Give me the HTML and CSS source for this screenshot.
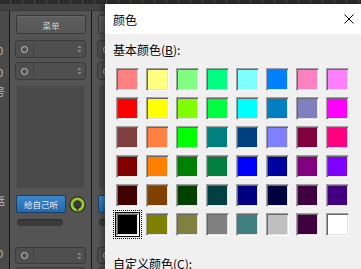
FILE: index.html
```html
<!DOCTYPE html>
<html lang="zh-CN">
<head>
  <meta charset="UTF-8">
  <link rel="stylesheet" href="styles.css">
  <title>颜色</title>
</head>
<body>
  <div class="ruler"></div>
  <div class="main">

    <div class="mixer">
      <div class="band"></div>
      <div class="strips">
        <div class="labels">
          <span class="lab lab1">0</span>
          <span class="lab lab2">0</span>
          <span class="lab lab3">号</span>
          <span class="lab lab4">话</span>
          <span class="lab lab5">0</span>
        </div>

        <div class="strip">
          <div class="menu-btn">菜单</div>
          <div class="combo first"><span class="ring-cell"><i class="ring"></i></span><svg class="arrows" width="5" height="8" viewBox="0 0 5 8"><path d="M2.5 0.5 L4.5 3 H0.5Z M2.5 7.5 L4.5 5 H0.5Z" fill="#8c8c8c"/></svg></div>
          <div class="combo second"><span class="ring-cell"><i class="ring"></i></span><svg class="arrows" width="5" height="8" viewBox="0 0 5 8"><path d="M2.5 0.5 L4.5 3 H0.5Z M2.5 7.5 L4.5 5 H0.5Z" fill="#8c8c8c"/></svg></div>
          <div class="meter"></div>
          <div class="monitor">
            <div class="blue-btn">给自己听</div>
            <svg class="knob" width="17" height="17" viewBox="0 0 17 17">
              <circle cx="8.5" cy="8.5" r="8.3" fill="#2c2c2c"/>
              <circle cx="8.5" cy="8.5" r="5.6" fill="none" stroke="#9cc92b" stroke-width="2.8"/>
              <circle cx="8.5" cy="8.5" r="3.4" fill="#3b3b3b"/>
              <rect x="7.6" y="9.5" width="1.8" height="5" fill="#2c2c2c"/>
            </svg>
          </div>
          <div class="slider"></div>
          <div class="combo third"><span class="ring-cell"><i class="ring"></i></span><svg class="arrows" width="5" height="8" viewBox="0 0 5 8"><path d="M2.5 0.5 L4.5 3 H0.5Z M2.5 7.5 L4.5 5 H0.5Z" fill="#8c8c8c"/></svg></div>
          <div class="combo fourth"></div>
        </div>

        <!-- next strip, only its left edge shows under the dialog -->
        <div class="strip">
          <div class="menu-btn"></div>
          <div class="combo first"><span class="ring-cell"><i class="ring"></i></span></div>
          <div class="combo second"><span class="ring-cell"><i class="ring"></i></span></div>
          <div class="meter"></div>
          <div class="monitor">
            <div class="blue-btn"></div>
          </div>
          <div class="slider"></div>
          <div class="combo third"><span class="ring-cell"><i class="ring"></i></span></div>
          <div class="combo fourth"></div>
        </div>
      </div>
    </div>

    <div class="dialog">
      <div class="titlebar">
        <span class="title">颜色</span>
        <svg class="close" width="10" height="10" viewBox="0 0 10 10"><path d="M0.5 0.5 L9.5 9.5 M9.5 0.5 L0.5 9.5" stroke="#000" stroke-width="1"/></svg>
      </div>
      <div class="dlg-body">
        <div class="label">基本颜色(<u>B</u>):</div>
        <div class="swatches">
          <div class="sw" style="background:#ff8080"></div>
          <div class="sw" style="background:#ffff80"></div>
          <div class="sw" style="background:#80ff80"></div>
          <div class="sw" style="background:#00ff80"></div>
          <div class="sw" style="background:#80ffff"></div>
          <div class="sw" style="background:#0080ff"></div>
          <div class="sw" style="background:#ff80c0"></div>
          <div class="sw" style="background:#ff80ff"></div>

          <div class="sw" style="background:#ff0000"></div>
          <div class="sw" style="background:#ffff00"></div>
          <div class="sw" style="background:#80ff00"></div>
          <div class="sw" style="background:#00ff40"></div>
          <div class="sw" style="background:#00ffff"></div>
          <div class="sw" style="background:#0080c0"></div>
          <div class="sw" style="background:#8080c0"></div>
          <div class="sw" style="background:#ff00ff"></div>

          <div class="sw" style="background:#804040"></div>
          <div class="sw" style="background:#ff8040"></div>
          <div class="sw" style="background:#00ff00"></div>
          <div class="sw" style="background:#008080"></div>
          <div class="sw" style="background:#004080"></div>
          <div class="sw" style="background:#8080ff"></div>
          <div class="sw" style="background:#800040"></div>
          <div class="sw" style="background:#ff0080"></div>

          <div class="sw" style="background:#800000"></div>
          <div class="sw" style="background:#ff8000"></div>
          <div class="sw" style="background:#008000"></div>
          <div class="sw" style="background:#008040"></div>
          <div class="sw" style="background:#0000ff"></div>
          <div class="sw" style="background:#0000a0"></div>
          <div class="sw" style="background:#800080"></div>
          <div class="sw" style="background:#8000ff"></div>

          <div class="sw" style="background:#400000"></div>
          <div class="sw" style="background:#804000"></div>
          <div class="sw" style="background:#004000"></div>
          <div class="sw" style="background:#004040"></div>
          <div class="sw" style="background:#000080"></div>
          <div class="sw" style="background:#000040"></div>
          <div class="sw" style="background:#400040"></div>
          <div class="sw" style="background:#400080"></div>

          <div class="sw selected" style="background:#000000"></div>
          <div class="sw" style="background:#808000"></div>
          <div class="sw" style="background:#808040"></div>
          <div class="sw" style="background:#808080"></div>
          <div class="sw" style="background:#408080"></div>
          <div class="sw" style="background:#c0c0c0"></div>
          <div class="sw" style="background:#400040"></div>
          <div class="sw" style="background:#ffffff"></div>
        </div>
        <div class="label custom">自定义颜色(<u>C</u>):</div>
      </div>
    </div>

  </div>
</body>
</html>
```

FILE: styles.css
```css
body{
  margin:0;
  width:361px; height:269px;
  overflow:hidden;
  background:#4b4b4b;
  font-family:"Noto Sans CJK SC", sans-serif;
}

.ruler{
  height:4px;
  background:repeating-linear-gradient(90deg, #2b2b2b 0 11px, #4a4a4a 11px 12px);
  background-position:-1px 0;
}

.main{
  display:flex;
  height:265px;
}

/* mixer on the left */
.mixer{
  width:105px; flex:none;
  overflow:hidden;
  display:flex; flex-direction:column;
}

.band{
  height:6px; flex:none;
  background:#424242;
  border-bottom:1px solid #383838;
}

.strips{
  display:flex;
  flex:1;
  min-height:0;
  overflow:hidden;
}

.labels{
  width:10px; flex:none;
  box-sizing:border-box;
  border-right:1px solid #161616;
  background:#4a4a4a;
  overflow:hidden;
  display:flex; flex-direction:column;
}

.lab{
  display:block;
  flex:none;
  font-family:"Liberation Sans", sans-serif;
  font-size:11px; line-height:11px;
  color:#b8b8b8;
  white-space:nowrap;
  margin-left:-3px;
}
.lab1{ margin-top:35px; }
.lab2{ margin-top:11px; }
.lab3{ margin-top:7px; margin-left:-5px; font-family:"Noto Sans CJK SC", sans-serif; font-size:10px; }
.lab4{ margin-top:98px; margin-left:-5px; font-family:"Noto Sans CJK SC", sans-serif; font-size:10px; }
.lab5{ margin-top:43px; }

.strip{
  width:82px; flex:none;
  box-sizing:border-box;
  padding:4px 5px 0 6px;
  border-right:1px solid #161616;
  background:#545454;
}

.menu-btn{
  height:19px;
  box-sizing:border-box;
  border:1px solid #393939;
  border-radius:2px;
  background:linear-gradient(#5e5e5e, #565656);
  box-shadow:inset 0 1px rgba(255,255,255,0.07);
  color:#cfcfcf;
  font-size:8.5px;
  display:flex; align-items:center; justify-content:center;
}

.combo{
  margin-left:-1px;
  width:71px; height:18px;
  box-sizing:border-box;
  border:1px solid #3b3b3b;
  border-radius:3px;
  background:#4f4f4f;
  display:flex; align-items:center;
}
.combo.first{ margin-top:6px; }
.combo.second{ margin-top:4px; }
.combo.third{ margin-top:21px; height:17px; }
.combo.fourth{ margin-top:3px; }

.ring-cell{
  width:17px; height:100%;
  border-right:1px solid #444;
  display:flex; align-items:center; justify-content:center;
}
.ring{
  width:5px; height:5px;
  border:1.5px solid #cacaca;
  border-radius:50%;
}
.arrows{
  margin-left:auto;
  margin-right:3px;
}

.meter{
  margin:6px 0 0 1px;
  width:67px; height:102px;
  background:#4a4a4a;
  box-shadow:inset 1px 0 #474747, inset -1px 0 #474747;
}

.monitor{
  margin-top:7px;
  height:18px;
  display:flex; align-items:center;
  gap:3px;
}

.blue-btn{
  width:50px; height:18px;
  box-sizing:border-box;
  border:1px solid #1c3d63;
  border-radius:2px;
  background:linear-gradient(#3b88cf, #2368ad);
  color:#e6efff;
  font-size:8.5px;
  display:flex; align-items:center; justify-content:center;
  flex:none;
}

.knob{ flex:none; }

.slider{
  margin:6px 0 0 1px;
  width:46px; height:7px;
  border-radius:4px;
  background:#3b3b3b;
  box-shadow:inset 0 1px 1px #2c2c2c;
}

/* colour dialog */
.dialog{
  flex:1;
  background:#f0f0f0;
  display:flex; flex-direction:column;
  box-shadow:-3px 0 5px rgba(0,0,0,0.35);
  z-index:1;
}

.titlebar{
  height:30px; flex:none;
  background:#fff;
  display:flex; align-items:center;
  padding-left:8px;
}

.title{
  font-size:12px;
  color:#000;
}

.close{
  margin-left:auto;
  margin-right:7px;
}

.dlg-body{
  padding:8px 0 0 8px;
}

.label{
  font-size:12px;
  line-height:16px;
  color:#000;
}
.label u{ text-decoration-thickness:1px; }

.label.custom{ margin-top:20px; }

.swatches{
  margin:10px 0 0 3px;
  display:grid;
  grid-template-columns:repeat(8, 23px);
  grid-auto-rows:23px;
  column-gap:7px;
  row-gap:6px;
}

.sw{
  box-sizing:border-box;
  border:1px solid;
  border-color:#a0a0a0 #fff #fff #a0a0a0;
  box-shadow:inset 1px 1px #696969, inset -1px -1px #e3e3e3;
}

.sw.selected{
  position:relative;
  outline:1px solid #000;
}
.sw.selected::after{
  content:"";
  position:absolute;
  inset:-4px;
  border:1px dotted #000;
}
```
